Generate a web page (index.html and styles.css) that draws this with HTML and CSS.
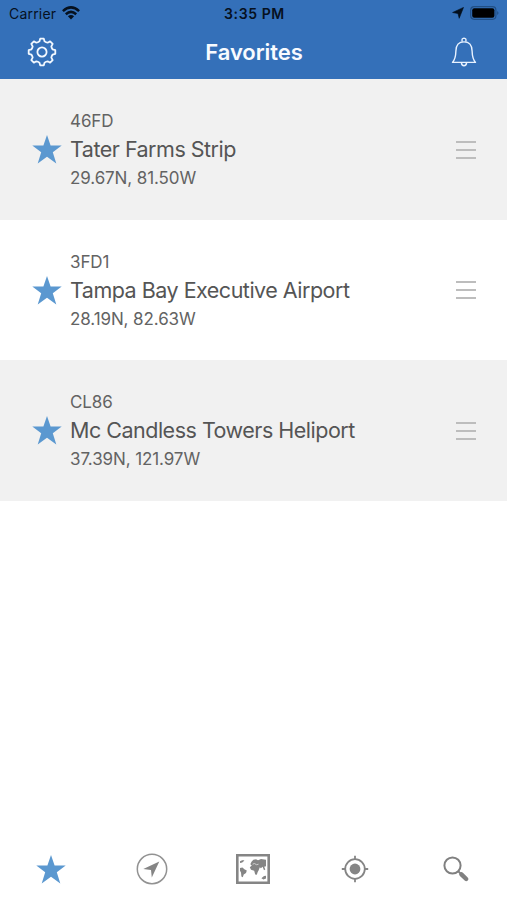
FILE: index.html
```html
<!DOCTYPE html>
<html lang="en">
<head>
<meta charset="utf-8">
<title>Favorites</title>
<link rel="stylesheet" href="styles.css">
</head>
<body>
<svg class="defs" width="0" height="0" aria-hidden="true">
  <symbol id="star" viewBox="0 0 30 29"><path d="M15 0L18.6 10.4H29.7L20.8 17.2L24.3 28.4L15 21.8L5.7 28.4L9.2 17.2L.3 10.4H11.4Z"/></symbol>
  <symbol id="handle" viewBox="0 0 20 20"><path d="M0 2H20M0 10H20M0 18H20" stroke="#bdbdbd" stroke-width="2"/></symbol>
</svg>
<div class="app">
  <header class="header">
    <div class="status">
      <div class="carrier"><span>Carrier</span>
        <svg width="18" height="14" viewBox="0 0 18 14" fill="none" stroke="#06111f" stroke-width="2.5"><path d="M.9 5.1Q9-2.3 17.1 5.1M3.8 8.2Q9 3.6 14.2 8.2"/><path d="M9 13.4L5.9 10.3Q9 7.8 12.1 10.3Z" fill="#06111f" stroke="none"/></svg>
      </div>
      <time class="clock">3:35 PM</time>
      <div class="power">
        <svg width="12" height="12" viewBox="0 0 12 12"><path d="M11.5.4L7.2 11.3L6 6.6L.6 5.5Z" fill="#04101e" stroke="#04101e" stroke-width=".6" stroke-linejoin="round"/></svg>
        <svg width="30" height="14" viewBox="0 0 30 14"><rect x=".7" y=".7" width="25.2" height="12.6" rx="3.5" fill="none" stroke="#214f85" stroke-width="1.2"/><rect x="2.2" y="2.2" width="22.2" height="9.6" rx="2" fill="#000"/><path d="M27.2 5Q29.8 7 27.2 9Z" fill="#214f85"/></svg>
      </div>
    </div>
    <div class="nav">
      <svg width="30" height="30" viewBox="-15 -15 30 30" fill="none" stroke="#f2f8ff" stroke-width="1.8" stroke-linejoin="round"><path d="M-1.8-13.3H1.8L2.6-10.6Q4-9.5 5.66-9.33L8.13-10.68L10.68-8.13L9.33-5.66Q9.5-4 10.6-2.6L13.3-1.8V1.8L10.6 2.6Q9.5 4 9.33 5.66L10.68 8.13L8.13 10.68L5.66 9.33Q4 9.5 2.6 10.6L1.8 13.3H-1.8L-2.6 10.6Q-4 9.5-5.66 9.33L-8.13 10.68L-10.68 8.13L-9.33 5.66Q-9.5 4-10.6 2.6L-13.3 1.8V-1.8L-10.6-2.6Q-9.5-4-9.33-5.66L-10.68-8.13L-8.13-10.68L-5.66-9.33Q-4-9.5-2.6-10.6Z"/><circle r="4.6"/></svg>
      <h1>Favorites</h1>
      <svg width="26" height="30" viewBox="0 0 26 30" fill="none" stroke="#e8f2ff" stroke-width="1.4" stroke-linejoin="round"><path d="M11.3 4.8Q10.2 1.2 13 1.1Q15.8 1.2 14.7 4.8M10.4 25.6Q10.6 28.7 13 28.7Q15.4 28.7 15.6 25.6"/><path d="M1.5 25.4Q4.7 21.8 4.9 14C5 8 8 4.9 13 4.9S21 8 21.1 14Q21.3 21.8 24.5 25.4Z"/></svg>
    </div>
  </header>
  <main class="list">
    <article class="row">
      <svg class="star" width="30" height="29"><use href="#star"/></svg>
      <div class="info"><p>46FD</p><h2>Tater Farms Strip</h2><p>29.67N, 81.50W</p></div>
      <svg width="20" height="20"><use href="#handle"/></svg>
    </article>
    <article class="row">
      <svg class="star" width="30" height="29"><use href="#star"/></svg>
      <div class="info"><p>3FD1</p><h2>Tampa Bay Executive Airport</h2><p>28.19N, 82.63W</p></div>
      <svg width="20" height="20"><use href="#handle"/></svg>
    </article>
    <article class="row">
      <svg class="star" width="30" height="29"><use href="#star"/></svg>
      <div class="info"><p>CL86</p><h2>Mc Candless Towers Heliport</h2><p>37.39N, 121.97W</p></div>
      <svg width="20" height="20"><use href="#handle"/></svg>
    </article>
  </main>
  <nav class="tabs">
    <a><svg class="star" width="30" height="29"><use href="#star"/></svg></a>
    <a><svg width="32" height="32" viewBox="0 0 32 32"><circle cx="16" cy="16" r="14.7" fill="none" stroke="#929292" stroke-width="1.5"/><path d="M23.3 8.4L15.8 24.6L15 17L7.3 16.1Z" fill="#858585"/></svg></a>
    <a><svg width="34" height="30" viewBox="0 0 34 30"><path d="M1.3 1.3H32.7V28.7H1.3Z" fill="none" stroke="#858585" stroke-width="2.6"/><g fill="#858585"><path d="M4 7.2L6.2 6.2H8.4L7 8L5.5 8.8L4 9.1ZM4 14L6.5 13.5L8.3 15.2L10.8 16.6L10 19L7.7 20.6L6.8 23.3L5.4 22.6L5 18.5L4 16.8ZM14.3 10.2L15.5 7.8L17.4 5.8L20 5.2L22 6.3L25 5L30 5.7V12.2L28.2 12.8L29.3 15.6L28 16.2L26.6 12.7L24.9 14.3L23.8 13.2L22.7 16.2L21.7 18.1L20.8 20.7L19.2 20.6L18.2 16.8L15 15.7L13.8 13.3L15.8 11.4ZM25.4 24.2L28 22.1L30 21.7V24.5L27.4 25.5Z"/></g><path d="M16.6 10.2L18.4 9.5L20.5 10.7L22.5 10.2" fill="none" stroke="#d7d7d7" stroke-width=".9"/></svg></a>
    <a><svg width="28" height="28" viewBox="0 0 28 28" fill="none" stroke="#858585"><circle cx="14" cy="14" r="9.8" stroke-width="1.8"/><circle cx="14" cy="14" r="5.4" fill="#858585" stroke="none"/><path d="M14 .8V5M14 23V27.2M.8 14H5M23 14H27.2" stroke-width="1.8"/></svg></a>
    <a><svg width="28" height="28" viewBox="0 0 28 28" fill="none" stroke="#808080"><circle cx="10.5" cy="10.5" r="8.1" stroke-width="2"/><path d="M16.4 16.4L19 19" stroke-width="2"/><path d="M19.4 19.4L24.2 24" stroke-width="4.4" stroke-linecap="round"/></svg></a>
  </nav>
</div>
</body>
</html>
```
FILE: styles.css
```css
* { box-sizing: border-box; }
body, h1, h2, p { margin: 0; }
body { font-family: Inter, "Liberation Sans", sans-serif; background: #fff; }
svg { display: block; flex: none; }
.defs { display: none; }
.app { height: 900px; display: flex; flex-direction: column; }
.header { height: 79.4px; background: #3470b9; }
.status { height: 27px; display: grid; grid-template-columns: 1fr auto 1fr; align-items: center; padding: 0 7px 0 9px; color: #06111f; font-size: 14px; }
.carrier { display: flex; align-items: center; gap: 6px; letter-spacing: .2px; }
.carrier svg { margin-top: -2px; }
.clock { font-weight: 600; letter-spacing: .6px; }
.power { display: flex; align-items: center; justify-content: flex-end; gap: 6px; margin-top: -1px; }
.nav { height: 50px; display: grid; grid-template-columns: 30px 1fr 26px; align-items: center; padding: 0 30px 0 27px; }
.nav h1 { text-align: center; color: #f8fbff; font-size: 22px; line-height: 28px; font-weight: 600; letter-spacing: -.05px; }
.list { flex: 1; }
.row { height: 140.5px; display: flex; align-items: center; padding: 0 31px 0 32px; gap: 8px; background: #fff; }
.row:nth-child(odd) { background: #f1f1f1; }
.star { fill: #5b98d0; }
.info { flex: 1; color: #555; white-space: nowrap; }
.info p { font-size: 17px; line-height: 24px; letter-spacing: -.1px; color: #636363; }
.info h2 { font-size: 21.5px; font-weight: 400; line-height: 33px; letter-spacing: -.5px; }
.tabs { height: 62px; display: grid; grid-template-columns: repeat(5, 1fr); align-items: center; }
.tabs a { display: flex; justify-content: center; }
```
